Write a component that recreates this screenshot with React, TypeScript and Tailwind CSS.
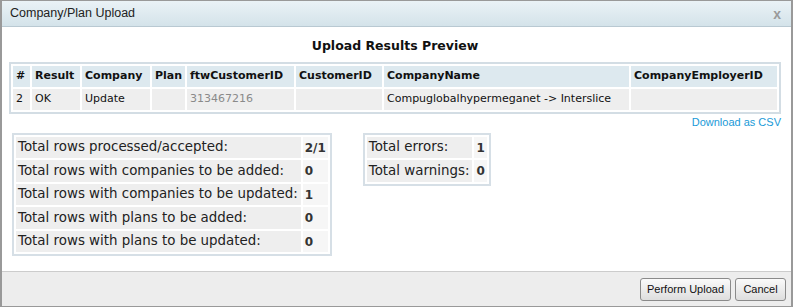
import React from "react";

const cols = ["#", "Result", "Company", "Plan", "ftwCustomerID", "CustomerID", "CompanyName", "CompanyEmployerID"];
const widths = ["w-[17px]", "w-[48px]", "w-[68px]", "w-[33px]", "w-[107px]", "w-[86px]", "w-[245px]", ""];

const leftStats: [string, string][] = [
  ["Total rows processed/accepted:", "2/1"],
  ["Total rows with companies to be added:", "0"],
  ["Total rows with companies to be updated:", "1"],
  ["Total rows with plans to be added:", "0"],
  ["Total rows with plans to be updated:", "0"],
];

const rightStats: [string, string][] = [
  ["Total errors:", "1"],
  ["Total warnings:", "0"],
];

function StatsTable({ rows }: { rows: [string, string][] }) {
  return (
    <table className="border-separate border-spacing-[2px] border-2 border-[#d6dfe6] self-start text-[13.4px]">
      <tbody>
        {rows.map(([label, value]) => (
          <tr key={label} className="h-[21.5px]">
            <td className="bg-[#eeeeee] pl-[2px] pr-[3px] text-[#222]">{label}</td>
            <td className="bg-[#f6f6f6] pl-[2px] pr-[2px] font-bold text-[12px] text-[#333]">{value}</td>
          </tr>
        ))}
      </tbody>
    </table>
  );
}

export default function App() {
  return (
    <div className="w-[793px] h-[307px] border-x-2 border-y border-[#999] bg-white flex flex-col text-[11px] font-['DejaVu_Sans',Verdana,sans-serif] text-[#111] overflow-hidden">
      {/* title bar */}
      <div className="h-[26px] shrink-0 flex items-center justify-between pl-[8px] pr-[10px] bg-gradient-to-b from-[#eaf2f6] to-[#d4e3ea] border-b border-[#b9c9d2] font-['Liberation_Sans',Arial,sans-serif] text-[12.5px] text-[#222]">
        <span>Company/Plan Upload</span>
        <span className="text-[#9a9a9a] font-bold text-[14px] leading-none">x</span>
      </div>

      {/* body */}
      <div className="flex-1 flex flex-col pl-[7px] pr-[10px] pt-[10px]">
        <div className="text-center font-bold text-[12.5px] text-[#111] mb-[6px]">Upload Results Preview</div>

        <table className="w-full border-separate border-spacing-[2px] border-2 border-[#d3dde4]">
          <thead>
            <tr className="h-[21px]">
              {cols.map((c, i) => (
                <th key={c} className={`bg-[#dde9ef] text-left font-bold pl-[3px] pr-[2px] ${widths[i]}`}>{c}</th>
              ))}
            </tr>
          </thead>
          <tbody>
            <tr className="h-[21px]">
              <td className="bg-[#eeeeee] pl-[3px]">2</td>
              <td className="bg-[#eeeeee] pl-[3px]">OK</td>
              <td className="bg-[#eeeeee] pl-[3px]">Update</td>
              <td className="bg-[#eeeeee] pl-[3px]"></td>
              <td className="bg-[#eeeeee] pl-[3px] text-[#8a8a8a]">313467216</td>
              <td className="bg-[#eeeeee] pl-[3px]"></td>
              <td className="bg-[#eeeeee] pl-[3px]">Compuglobalhypermeganet -&gt; Interslice</td>
              <td className="bg-[#eeeeee] pl-[3px]"></td>
            </tr>
          </tbody>
        </table>

        <div className="flex justify-end mt-[1px] font-['Liberation_Sans',Arial,sans-serif] text-[11px] text-[#1a9ad8] leading-[14px]">
          Download as CSV
        </div>

        <div className="flex gap-[31px] pl-[3px] mt-[4px]">
          <StatsTable rows={leftStats} />
          <StatsTable rows={rightStats} />
        </div>
      </div>

      {/* footer */}
      <div className="h-[35px] shrink-0 bg-[#ededed] border-t border-[#cccccc] flex items-center justify-end gap-[4px] pr-[5px] font-['Liberation_Sans',Arial,sans-serif] text-[11px] text-[#111]">
        <button className="h-[23px] w-[91px] rounded-[3px] border border-[#8a8a8a] bg-gradient-to-b from-[#fafafa] to-[#dedede]">Perform Upload</button>
        <button className="h-[23px] w-[51px] rounded-[3px] border border-[#8a8a8a] bg-gradient-to-b from-[#fafafa] to-[#dedede]">Cancel</button>
      </div>
    </div>
  );
}
